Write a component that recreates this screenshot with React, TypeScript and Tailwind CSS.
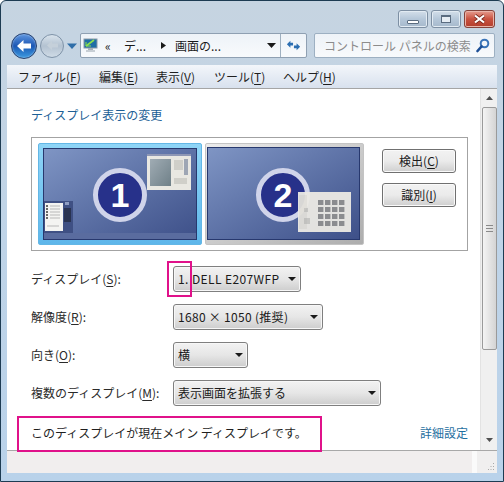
const jp = "font-['Meiryo','Noto_Sans_CJK_JP','Noto_Sans',sans-serif]";

function U({ c }: { c: string }) {
  return <span className="underline underline-offset-2">{c}</span>;
}

function Arrow({ className = "", small = false }: { className?: string; small?: boolean }) {
  return (
    <svg width={small ? 8 : 9} height={small ? 4 : 5} viewBox="0 0 9 5" preserveAspectRatio="none" className={className}>
      <path d="M0 0H9L4.5 5Z" fill="#1a1a1a" />
    </svg>
  );
}

function Select({ w, text, track = "" }: { w: string; text: string; track?: string }) {
  return (
    <div className={`${w} h-[26px] flex items-center justify-between pl-[4px] pr-[4px] rounded-[3px] border border-[#7f7f7f] bg-gradient-to-b from-[#f2f2f2] via-[#e6e6e6] to-[#cdcdcd] text-[12px] text-[#1a1a1a] shadow-[inset_0_0_0_1px_#f7f7f7] whitespace-nowrap`}>
      <span className={track}>{text}</span>
      <Arrow small />
    </div>
  );
}

function Row({ label, u, w, text, mt, track }: { label: string; u: string; w: string; text: string; mt: string; track?: string }) {
  return (
    <div className={`flex items-center ${mt}`}>
      <div className="w-[142px] text-[12px] text-[#2a2a2a] whitespace-nowrap">
        {label}(<U c={u} />):
      </div>
      <Select w={w} text={text} track={track} />
    </div>
  );
}

function Btn({ children }: { children: React.ReactNode }) {
  return (
    <div className="w-[74px] h-[24px] flex items-center justify-center rounded-[3px] border border-[#707070] bg-gradient-to-b from-[#f2f2f2] via-[#ebebeb] to-[#cfcfcf] text-[12px] text-[#1a1a1a] shadow-[inset_0_0_0_1px_#fafafa]">
      {children}
    </div>
  );
}

function Badge({ n }: { n: string }) {
  return (
    <div className="w-[54px] h-[54px] rounded-full bg-[#27318a] border-[5px] border-[#d0d4ea] flex items-center justify-center text-white font-bold text-[34px] leading-none font-['Liberation_Sans',sans-serif]">
      {n}
    </div>
  );
}

function ThumbWin1() {
  return (
    <svg width="44" height="36" viewBox="0 0 44 36">
      <rect width="44" height="36" fill="#e9e8e2" />
      <rect y="0" width="44" height="2" fill="#8e97b5" />
      <defs>
        <linearGradient id="g1" x1="0" y1="0" x2="1" y2="1">
          <stop offset="0" stopColor="#a0acb4" />
          <stop offset="1" stopColor="#6f8088" />
        </linearGradient>
      </defs>
      <rect x="3" y="5" width="21" height="27" fill="url(#g1)" />
      <path d="M27 7h9M27 9h9M27 11h9M27 13h9M27 15h9M27 25h13M27 27h13M27 29h13" stroke="#b6b6b0" />
      <rect x="37" y="5" width="4" height="16" fill="#9ea6b4" />
    </svg>
  );
}

function ThumbWin2() {
  const cells = [];
  for (let r = 0; r < 4; r++) for (let c = 0; c < 4; c++) cells.push(<rect key={`${r}${c}`} x={20 + c * 7} y={8 + r * 7} width="5.4" height="5" fill="#8f8f8f" />);
  return (
    <svg width="53" height="40" viewBox="0 0 53 40" className="opacity-95">
      <rect width="53" height="40" fill="#eceae4" />
      <rect x="1" y="3" width="8" height="34" fill="#e2e0da" />
      <path d="M6 17h4M6 19h4M6 27h6M6 29h6M6 31h6" stroke="#aeaeaa" />
      {cells}
    </svg>
  );
}

function ThumbWin3() {
  return (
    <svg width="29" height="32" viewBox="0 0 29 32">
      <rect width="29" height="32" fill="#3f5084" />
      <rect x="1" y="2" width="18" height="28" fill="#f4f4f2" />
      <path d="M2 5h2M2 8h2M2 11h2M2 14h2M2 17h2" stroke="#3a3a3a" strokeWidth="1.5" />
      <path d="M6 5h10M6 8h10M6 11h10M6 14h10M6 17h10M3 25h12" stroke="#b8b8b8" />
      <path d="M20 8h7M20 10h7M20 12h7M20 14h7M20 16h7M20 18h7M20 20h7" stroke="#14161f" />
      <rect x="21" y="1" width="4" height="3" fill="#8d9cc2" />
    </svg>
  );
}

function Monitor({ selected, w, children }: { selected?: boolean; w: string; children: React.ReactNode }) {
  return (
    <div className={`${w} h-[102px] relative rounded-[2px] ${selected ? "p-[4px] bg-gradient-to-b from-[#8fd5f7] to-[#5eb6ea] border border-[#63b7e6]" : "pl-[1px] pr-[3px] pt-[3px] pb-[4px] bg-gradient-to-br from-[#ececec] to-[#adadad] border border-[#c4c4c4]"}`}>
      <div className="w-full h-full border border-[#27386e] bg-gradient-to-br from-[#7f95c4] to-[#3e5089] relative">
        {children}
      </div>
    </div>
  );
}

export default function App() {
  return (
    <div className={`${jp} w-[504px] h-[482px] relative overflow-hidden flex flex-col rounded-t-[6px] border border-[#1d3b52] bg-gradient-to-b from-[#c6d4e1] via-[#bfd4e8] to-[#b9d2ea] px-[6px] pb-[7px]`}>
      {/* title bar */}
      <div className="h-[31px] shrink-0 flex justify-end items-start pt-[9px] pr-[2px] gap-[3px]">
        <div className="w-[30px] h-[18px] rounded-[3px] border border-[#7d8fa3] bg-gradient-to-b from-[#d4dfea] via-[#b5c7d9] to-[#a6b9cc] flex items-end justify-center pb-[3px] shadow-[inset_0_0_0_1px_#e2ebf3]">
          <div className="w-[12px] h-[4px] bg-white border border-[#5a6c80] rounded-[1px]" />
        </div>
        <div className="w-[30px] h-[18px] rounded-[3px] border border-[#7d8fa3] bg-gradient-to-b from-[#d4dfea] via-[#b5c7d9] to-[#a6b9cc] flex items-center justify-center shadow-[inset_0_0_0_1px_#e2ebf3]">
          <div className="w-[10px] h-[8px] border border-t-2 border-[#5a6c80] bg-[#e6edf4]" />
        </div>
        <div className="w-[31px] h-[18px] rounded-[3px] border border-[#84433b] bg-gradient-to-b from-[#e59c8f] via-[#c9513f] to-[#b23d2c] flex items-center justify-center shadow-[inset_0_0_0_1px_#e9b4a9]">
          <svg width="13" height="10" viewBox="0 0 13 10">
            <path d="M2 1.5L11 8.5M11 1.5L2 8.5" stroke="#7a2a1e" strokeWidth="3.6" />
            <path d="M2 1.5L11 8.5M11 1.5L2 8.5" stroke="#ffffff" strokeWidth="2.2" />
          </svg>
        </div>
      </div>

      {/* nav row */}
      <div className="h-[27px] shrink-0 flex items-center text-[12px]">
        <div className="ml-[4px] flex items-center">
          <div className="w-[26px] h-[26px] rounded-full border border-[#26406e] bg-gradient-to-b from-[#5f97e0] via-[#1d57b4] to-[#3c9ae0] flex items-center justify-center shadow-[inset_0_0_2px_#c0d8f5]">
            <svg width="16" height="14" viewBox="0 0 16 14"><path d="M1 7L7.5 1V4.5H15V9.5H7.5V13Z" fill="#fff" /></svg>
          </div>
          <div className="ml-[3px] w-[24px] h-[24px] rounded-full border border-[#7f93a8] bg-gradient-to-b from-[#d9e3ec] via-[#b3c2d1] to-[#cfdbe6] flex items-center justify-center">
            <svg width="13" height="11" viewBox="0 0 16 14"><path d="M1 7L7.5 1V4.5H15V9.5H7.5V13Z" fill="#c5d0da" /></svg>
          </div>
        </div>
        <svg width="10" height="6" viewBox="0 0 10 6" className="ml-[3px] mt-[1px]"><path d="M0 0.5H10L5 6Z" fill="#2f6ea8" /></svg>
        <div className="ml-[3px] w-[227px] h-[25px] flex items-center rounded-[2px] border border-[#8fa0b2] bg-gradient-to-b from-[#eef3f8] to-[#f8fafc] text-[#1a1a1a]">
          <svg width="15" height="15" viewBox="0 0 15 15" className="ml-[2px]">
            <rect x="1" y="1" width="13" height="9" fill="#1f6ea5" stroke="#8a99a8" />
            <path d="M3 8L11 2" stroke="#8be04e" strokeWidth="1.6" />
            <path d="M3 4V8H8" stroke="#8be04e" fill="none" />
            <rect x="5" y="10" width="5" height="2" fill="#a8b0b8" />
            <rect x="3" y="12" width="9" height="2" fill="#c7ced4" />
          </svg>
          <span className="ml-[7px] w-[19px] leading-none">«</span>
          <span>デ...</span>
          <svg width="5" height="7" viewBox="0 0 5 7" className="ml-[15px]"><path d="M0 0V7L5 3.5Z" fill="#1a1a1a" /></svg>
          <span className="ml-[9px] whitespace-nowrap">画面の...</span>
          <Arrow className="ml-auto mr-[4px]" />
          <div className="w-px h-full bg-[#9fb0c0]" />
          <div className="w-[25px] flex justify-center">
            <svg width="15" height="13" viewBox="0 0 17 14">
              <path d="M1 5.5L5 1.5V4H8V7H5V9.5Z" fill="#2d6fb2" />
              <path d="M16 8.5L12 12.5V10H9V7H12V4.5Z" fill="#2d6fb2" />
            </svg>
          </div>
        </div>
        <div className="ml-[7px] w-[181px] h-[25px] flex items-center justify-between pl-[9px] pr-[4px] rounded-[2px] border border-[#9db0c2] bg-gradient-to-b from-[#eef3f8] to-[#f8fafc] text-[#8c8c8c] whitespace-nowrap">
          <span>コントロール パネルの検索</span>
          <svg width="14" height="15" viewBox="0 0 14 15">
            <circle cx="8.5" cy="5.5" r="3.8" fill="none" stroke="#3a74b8" strokeWidth="2" />
            <path d="M5.5 8.5L1.5 13" stroke="#1d4f96" strokeWidth="2.6" strokeLinecap="round" />
          </svg>
        </div>
      </div>

      {/* menu */}
      <div className="mt-[6px] h-[24px] shrink-0 flex items-center border-b border-[#a5a5a5] bg-gradient-to-b from-[#f3f6fa] to-[#d8e1ee] text-[12px] text-[#1f1f1f] pl-[11px] whitespace-nowrap">
        <span className="w-[81px]">ファイル(<U c="F" />)</span>
        <span className="w-[57px]">編集(<U c="E" />)</span>
        <span className="w-[58px]">表示(<U c="V" />)</span>
        <span className="w-[69px]">ツール(<U c="T" />)</span>
        <span>ヘルプ(<U c="H" />)</span>
      </div>

      {/* body */}
      <div className="h-[362px] shrink-0 flex bg-white border-b border-[#a8a8a8]">
        <div className="w-[473px] pl-[24px] pr-[12px] pt-[15px]">
          <h1 className="text-[12px] leading-[22px] font-normal text-[#1d5f96] whitespace-nowrap">ディスプレイ表示の変更</h1>
          <div className="mt-[11px] h-[114px] w-[437px] border border-[#a3a3a3] flex pl-[6px] pt-[5px]">
            <Monitor selected w="w-[164px]">
              <div className="absolute left-[49px] top-[19px]"><Badge n="1" /></div>
              <div className="absolute left-[103px] top-[5px]"><ThumbWin1 /></div>
              <div className="absolute left-0 top-[52px]"><ThumbWin3 /></div>
              <div className="absolute left-0 right-0 bottom-0 h-[6px] bg-[#5a6c9f]" />
            </Monitor>
            <div className="w-[3px]" />
            <Monitor w="w-[159px]">
              <div className="absolute left-[48px] top-[20px]"><Badge n="2" /></div>
              <div className="absolute left-[90px] top-[44px]"><ThumbWin2 /></div>
            </Monitor>
            <div className="ml-[18px] flex flex-col gap-[10px] pt-[6px]">
              <Btn>検出(<U c="C" />)</Btn>
              <Btn>識別(<U c="I" />)</Btn>
            </div>
          </div>
          <Row mt="mt-[15px]" label="ディスプレイ" u="S" w="w-[128px]" text="1. DELL E207WFP" track="tracking-[0.4px]" />
          <Row mt="mt-[12px]" label="解像度" u="R" w="w-[150px]" text="1680 × 1050 (推奨)" track="tracking-[0.3px]" />
          <Row mt="mt-[12px]" label="向き" u="O" w="w-[75px]" text="横" />
          <Row mt="mt-[12px]" label="複数のディスプレイ" u="M" w="w-[208px]" text="表示画面を拡張する" />
          <div className="mt-[18px] flex justify-between items-center text-[12px] whitespace-nowrap">
            <span className="text-[#1f1f1f]">このディスプレイが現在メイン ディスプレイです。</span>
            <span className="text-[#1f6f9f]">詳細設定</span>
          </div>
        </div>
        {/* scrollbar */}
        <div className="w-[17px] flex flex-col items-center bg-[#f0f0f0] border-l border-[#e3e3e3]">
          <svg width="7" height="4" viewBox="0 0 7 4" className="mt-[7px]"><path d="M3.5 0L7 4H0Z" fill="#505050" /></svg>
          <div className="mt-[7px] w-[15px] h-[243px] rounded-[2px] border border-[#9a9a9a] bg-gradient-to-r from-[#f4f4f4] to-[#d4d4d4] flex items-center justify-center">
            <div className="w-[7px] h-[7px] border-y border-[#8a8a8a] bg-[linear-gradient(#8a8a8a,#8a8a8a)] bg-[length:100%_1px] bg-center bg-no-repeat" />
          </div>
          <svg width="7" height="4" viewBox="0 0 7 4" className="mt-auto mb-[8px]"><path d="M0 0H7L3.5 4Z" fill="#505050" /></svg>
        </div>
      </div>

      {/* status */}
      <div className="h-[22px] shrink-0 bg-[#f1eeee] flex justify-end">
        <div className="w-[25px] h-full bg-[#fafafa] flex justify-end">
          <div className="w-[20px] h-full bg-[#f0efef] flex items-end justify-end p-[2px]">
            <svg width="8" height="8" viewBox="0 0 8 8">
              <path d="M6 0h1v1H6zM3.500 3h1v1h-1zM6 3h1v1H6zM1 6h1v1H1zM3.500 6h1v1h-1zM6 6h1v1H6z" fill="#a9a9a9" />
            </svg>
          </div>
        </div>
      </div>

      {/* annotation overlays */}
      <div className="absolute left-[166px] top-[260px] w-[25px] h-[36px] border-2 border-[#e0118a]" />
      <div className="absolute left-[16px] top-[415px] w-[305px] h-[36px] border-2 border-[#e0118a]" />
    </div>
  );
}
